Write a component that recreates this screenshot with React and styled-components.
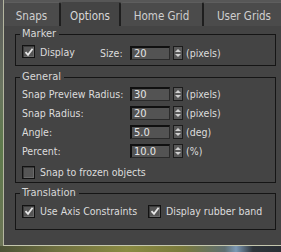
import styled, { createGlobalStyle } from "styled-components";

const GlobalStyle = createGlobalStyle`
html, body {
  margin: 0;
  padding: 0;
}
body {
  width: 281px;
  height: 252px;
  overflow: hidden;
  font-family: "DejaVu Sans Condensed", "DejaVu Sans", sans-serif;
  font-size: 10.5px;
}
`;

const Desktop = styled.div`
width: 281px;
height: 252px;
display: flex;
flex-direction: column;
background: linear-gradient(90deg, #4c5236 0%, #6f7040 20%, #8a8a42 45%, #7a7a3c 65%, #5f6e70 80%, #7c98b4 84%, #2e343a 90%, #2a2e34 100%);
`;

const Frame = styled.div`
height: 246px;
display: flex;
background: linear-gradient(180deg, #5a5a5a 0%, #6a7460 35%, #5e7a4c 60%, #6c7456 100%);
`;

const Window = styled.div`
margin-left: 3px;
flex: 1;
display: flex;
flex-direction: column;
background: #444444;
border-left: 1px solid #b4b6a0;
border-bottom: 1px solid #c4c6ae;
color: #dcdcdc;
`;

const TabBar = styled.div`
display: flex;
height: 26px;
padding-top: 2px;
box-sizing: border-box;
background: #575757;
`;

const Tab = styled.div`
width: ${(p) => p.$w}px;
flex-shrink: 0;
display: flex;
align-items: center;
justify-content: center;
padding-top: 2px;
box-sizing: border-box;
font-size: 11.5px;
color: ${(p) => (p.$active ? "#d8d8d8" : "#cfcfcf")};
background: ${(p) => (p.$active ? "#444444" : "#4b4b4b")};
border-top: 1px solid ${(p) => (p.$active ? "#444444" : "#5e5e5e")};
border-right: 2px solid #1e1e1e;
border-radius: 2px 2px 0 0;
&:last-child {
  border-right: none;
}
`;

const Body = styled.div`
display: flex;
flex-direction: column;
padding: 2px 8px 0 11px;
`;

const Group = styled.fieldset`
margin: ${(p) => p.$mt || 0}px 0 0 0;
padding: ${(p) => p.$pt}px 0 ${(p) => p.$pb}px 6px;
border: 1px solid #151515;
display: flex;
flex-direction: column;
gap: ${(p) => p.$gap || 0}px;
min-width: 0;
`;

const Legend = styled.legend`
margin-left: -2px;
padding: 0 3px 0 2px;
line-height: 12px;
font-size: 11px;
color: #d8d8d8;
`;

const Row = styled.div`
display: flex;
align-items: center;
height: ${(p) => p.$h || 14}px;
margin-top: ${(p) => p.$mt || 0}px;
`;

const Check = styled.label`
display: flex;
align-items: center;
gap: 5px;
font-size: 10.5px;
color: #dcdcdc;
width: ${(p) => (p.$w ? `${p.$w}px` : "auto")};
flex-shrink: 0;
white-space: nowrap;
align-self: ${(p) => (p.$top ? "flex-start" : "center")};
`;

const Box = styled.span`
width: 11px;
height: 11px;
border: 1px solid #121212;
background: #555555;
box-shadow: inset 1px 1px 0 #3a3a3a, inset -1px -1px 0 #6a6a6a;
display: flex;
align-items: center;
justify-content: center;
flex-shrink: 0;
`;

const Label = styled.span`
font-size: 10.5px;
color: #dcdcdc;
width: ${(p) => p.$w}px;
flex-shrink: 0;
white-space: nowrap;
`;

const Field = styled.div`
width: 40px;
height: 14px;
box-sizing: border-box;
background: #535353;
border: 1px solid #2a2a2a;
border-top: 2px solid #101010;
border-left: 2px solid #101010;
font-size: 11px;
line-height: 11px;
padding-left: 2px;
color: #e6e6e6;
flex-shrink: 0;
`;

const Spinner = styled.div`
width: 10px;
height: 14px;
margin-left: 3px;
box-sizing: border-box;
border: 1px solid #1c1c1c;
background: #585858;
display: flex;
flex-direction: column;
align-items: center;
justify-content: space-between;
padding: 2px 0;
flex-shrink: 0;
`;

const Arrow = styled.span`
width: 0;
height: 0;
border-left: 3px solid transparent;
border-right: 3px solid transparent;
${(p) => (p.$down ? "border-top: 3px solid #d0d0d0;" : "border-bottom: 3px solid #d0d0d0;")}
`;

const Unit = styled.span`
margin-left: 3px;
font-size: 10.5px;
color: #dcdcdc;
white-space: nowrap;
`;

function Tick() {
  return (
    <svg width="10" height="10" viewBox="0 0 10 10">
      <path d="M1.5 5.2 L4 7.8 L8.6 1.8" fill="none" stroke="#e8e8e8" strokeWidth="1.8" />
    </svg>
  );
}

function CheckItem({ checked, children, w, top }) {
  return (
    <Check $w={w} $top={top}>
      <Box>{checked && <Tick />}</Box>
      {children}
    </Check>
  );
}

function Spin({ value, unit }) {
  return (
    <>
      <Field>{value}</Field>
      <Spinner>
        <Arrow />
        <Arrow $down />
      </Spinner>
      <Unit>{unit}</Unit>
    </>
  );
}

const generalRows = [
  ["Snap Preview Radius:", "30", "(pixels)"],
  ["Snap Radius:", "20", "(pixels)"],
  ["Angle:", "5.0", "(deg)"],
  ["Percent:", "10.0", "(%)"],
];

export default function App() {
  return (
    <>
      <GlobalStyle />
      <Desktop>
        <Frame>
          <Window>
            <TabBar>
              <Tab $w={57}>Snaps</Tab>
              <Tab $w={60} $active>Options</Tab>
              <Tab $w={83}>Home Grid</Tab>
              <Tab $w={80}>User Grids</Tab>
            </TabBar>
            <Body>
              <Group $pt={5} $pb={4}>
                <Legend>Marker</Legend>
                <Row $h={16}>
                  <CheckItem checked w={78} top>Display</CheckItem>
                  <Label $w={30}>Size:</Label>
                  <Spin value="20" unit="(pixels)" />
                </Row>
              </Group>
              <Group $mt={5} $pt={4} $pb={4} $gap={5}>
                <Legend>General</Legend>
                {generalRows.map(([label, value, unit]) => (
                  <Row key={label}>
                    <Label $w={108}>{label}</Label>
                    <Spin value={value} unit={unit} />
                  </Row>
                ))}
                <Row $h={12} $mt={3}>
                  <CheckItem>Snap to frozen objects</CheckItem>
                </Row>
              </Group>
              <Group $mt={4} $pt={6} $pb={12}>
                <Legend>Translation</Legend>
                <Row $h={12}>
                  <CheckItem checked w={126}>Use Axis Constraints</CheckItem>
                  <CheckItem checked>Display rubber band</CheckItem>
                </Row>
              </Group>
            </Body>
          </Window>
        </Frame>
      </Desktop>
    </>
  );
}
